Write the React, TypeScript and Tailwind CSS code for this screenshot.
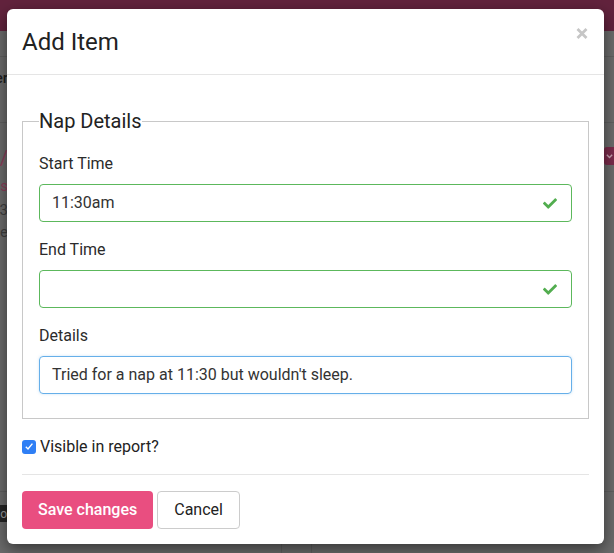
import React from "react";

function Check() {
  return (
    <svg width="14" height="11" viewBox="0 64 512 384" className="shrink-0">
      <path
        fill="#52ad4f"
        d="M173.898 439.404l-166.4-166.4c-9.997-9.997-9.997-26.206 0-36.204l36.203-36.204c9.997-9.998 26.207-9.998 36.204 0L192 312.69 432.095 72.596c9.997-9.997 26.207-9.997 36.204 0l36.203 36.204c9.997 9.997 9.997 26.206 0 36.204l-294.4 294.401c-9.998 9.997-26.207 9.997-36.204-.001z"
      />
    </svg>
  );
}

function Field({
  label,
  value,
  state,
}: {
  label: string;
  value: string;
  state: "ok" | "focus";
}) {
  return (
    <div className="flex flex-col">
      <label className="mb-[10px] block text-[16px] leading-[21px] text-[#2b2b2b]">{label}</label>
      <div
        className={
          state === "ok"
            ? "flex h-[38px] items-center justify-between rounded-[4px] border border-[#5cb85c] pl-[12px] pr-[14px] text-[16px] text-[#333]"
            : "flex h-[38px] items-center justify-between rounded-[4px] border border-[#66afe9] pl-[12px] pr-[14px] text-[16px] text-[#333] shadow-[0_0_3px_rgba(102,175,233,0.35)]"
        }
      >
        <span>{value}</span>
        {state === "ok" ? <Check /> : null}
      </div>
    </div>
  );
}

export default function App() {
  return (
    <div className="relative h-[553px] w-[614px] overflow-hidden bg-[#6b6b6b] font-['Roboto',sans-serif]">
      {/* dimmed page behind the dialog */}
      <div className="h-[31px] bg-[#62233d]" />
      <div className="h-[26px] border-b border-[#5f5f5f]" />
      <div className="flex h-[66px] justify-between border-b border-[#5f5f5f]">
        <div className="flex w-[8px] justify-end overflow-hidden pt-[11px]">
          <span className="whitespace-nowrap text-[15px] leading-[20px] font-medium text-[#1e1e1e]">Center</span>
        </div>
      </div>
      <div className="flex h-[369px] justify-between border-b border-[#5f5f5f]">
        <div className="flex w-[8px] flex-col items-end overflow-hidden pt-[24px]">
          <span className="whitespace-nowrap text-[20px] leading-[22px] text-[#8e3d5a]">Nap /</span>
          <span className="mt-[6px] whitespace-nowrap text-[15px] leading-[22px] text-[#8e3d5a]">Naps</span>
          <span className="mt-[2px] whitespace-nowrap text-[15px] leading-[22px] text-[#3e3e3e]">11:3</span>
          <span className="whitespace-nowrap text-[15px] leading-[22px] text-[#3e3e3e]">Trie</span>
        </div>
        <div className="pt-[24px]">
          <div className="flex h-[18px] w-[10px] items-center rounded-l-[3px] bg-[#7b2b4b] pl-[2px]">
            <svg width="7" height="5" viewBox="0 0 7 5">
              <path d="M0.8 0.8 L3.5 3.5 L6.2 0.8" fill="none" stroke="#c9a3b2" strokeWidth="1.4" />
            </svg>
          </div>
        </div>
      </div>
      <div className="flex h-[61px]">
        <div className="w-[282px] border-r border-[#5f5f5f] pt-[13px]">
          <div className="flex h-[17px] w-[8px] items-center justify-end overflow-hidden bg-[#262626]">
            <span className="pr-[1px] text-[12px] leading-none text-[#9a9a9a]">o</span>
          </div>
        </div>
        <div className="w-[30px] border-r border-[#5f5f5f]" />
        <div className="flex-1" />
      </div>

      {/* dialog */}
      <div className="absolute left-[7px] top-[9px] w-[597px] rounded-[6px] bg-white shadow-[0_5px_15px_rgba(0,0,0,0.5)]">
        <div className="relative border-b border-[#e5e5e5] px-[15px] pb-[15px] pt-[16px]">
          <h4 className="text-[24px] leading-[34px] text-[#222]">Add Item</h4>
          <button className="absolute right-[16px] top-[19px] flex h-[11px] w-[12px] items-center justify-center">
            <svg width="12" height="11" viewBox="0 0 12 11">
              <path d="M1.5 1 L10.5 10 M10.5 1 L1.5 10" stroke="#c6c6c6" strokeWidth="2.8" />
            </svg>
          </button>
        </div>

        <div className="px-[15px] pb-[15px] pt-[15px]">
          <fieldset className="mt-[20px] border border-[#c8c8c8] px-[16px] pb-[24px] pt-[21px]">
            <legend className="text-[20px] leading-[22px] text-[#222]">Nap Details</legend>
            <div className="flex flex-col gap-[17px]">
              <Field label="Start Time" value="11:30am" state="ok" />
              <Field label="End Time" value="" state="ok" />
              <Field label="Details" value="Tried for a nap at 11:30 but wouldn't sleep." state="focus" />
            </div>
          </fieldset>

          <div className="mt-[17px] flex items-center gap-[4px] text-[16px] leading-[21px] text-[#222]">
            <span className="flex h-[14px] w-[14px] items-center justify-center rounded-[3px] bg-[#2f7ff5]">
              <svg width="10" height="9" viewBox="0 0 10 9">
                <path d="M1.8 4.8 L4 7 L8.4 1.6" fill="none" stroke="#ffffff" strokeWidth="1.4" />
              </svg>
            </span>
            <span>Visible in report?</span>
          </div>

          <div className="mt-[17px] flex gap-[4px] border-t border-[#e5e5e5] pt-[16px]">
            <button className="h-[38px] rounded-[4px] bg-[#e94e80] px-[16px] text-[16px] font-medium text-white">
              Save changes
            </button>
            <button className="h-[38px] rounded-[4px] border border-[#cccccc] bg-white px-[16px] text-[16px] text-[#222]">
              Cancel
            </button>
          </div>
        </div>
      </div>
    </div>
  );
}
